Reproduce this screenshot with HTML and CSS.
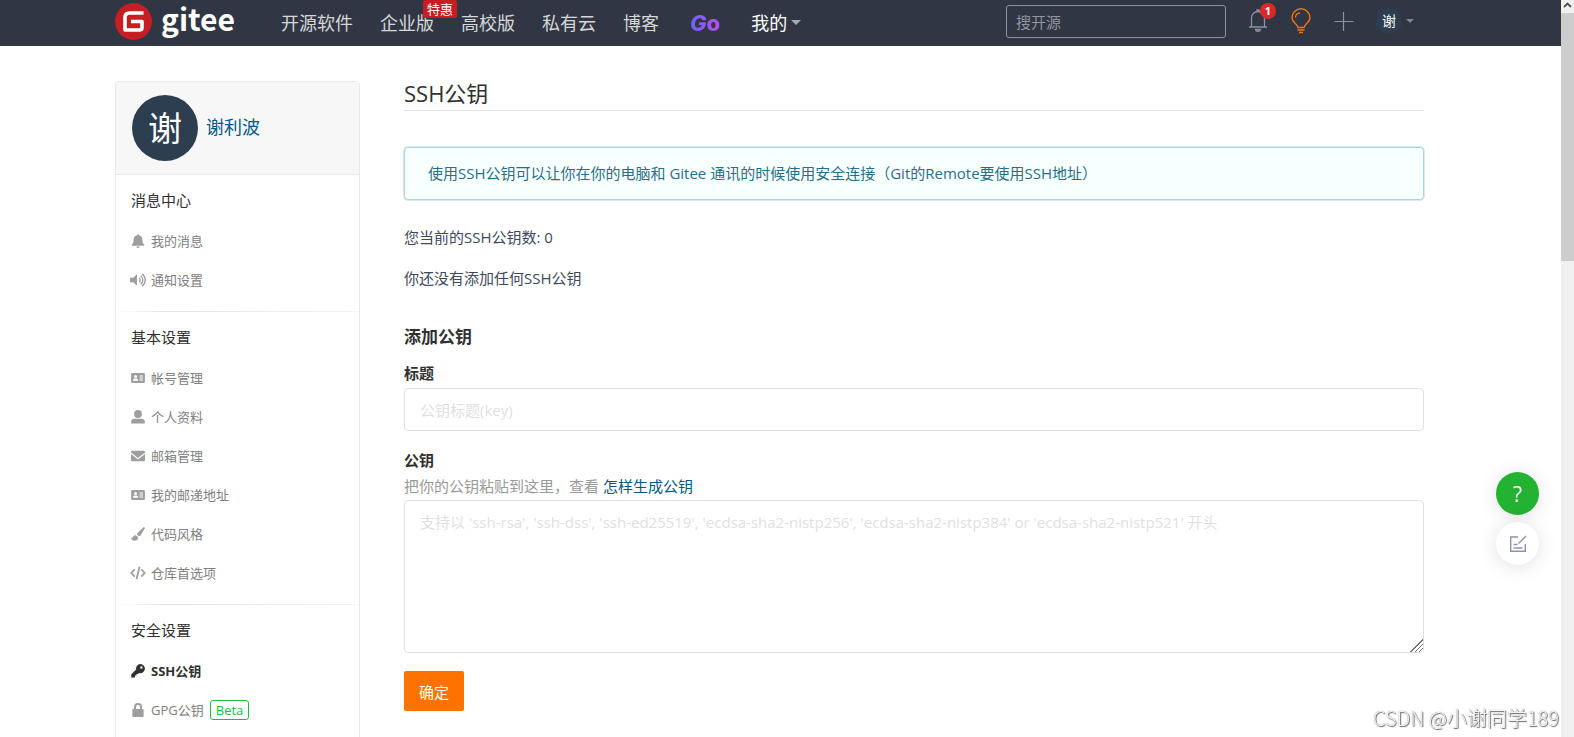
FILE: index.html
```html
<!DOCTYPE html>
<html lang="zh-CN">
  <head>
    <meta charset="UTF-8" />
    <meta name="viewport" content="width=device-width, initial-scale=1.0" />
    <title>SSH公钥 - Gitee</title>
    <link rel="stylesheet" href="styles.css">
  </head>
  <body>
    <svg class="sprite" aria-hidden="true">
      <symbol id="card" viewBox="0 0 14 12">
        <path fill-rule="evenodd" d="M1.3 1h11.4a1.2 1.2 0 0 1 1.2 1.2v7.6a1.2 1.2 0 0 1-1.2 1.2H1.3A1.2 1.2 0 0 1 .1 9.8V2.2A1.2 1.2 0 0 1 1.3 1zM4.6 3a1.5 1.5 0 1 0 0 3 1.5 1.5 0 0 0 0-3zM2 8.800h5.200c0-1.500-.8-2.300-1.600-2.300h-2C2.800 6.500 2 7.300 2 8.800zM8.500 3.500v1H12v-1zM8.500 5.500v1H12v-1zM8.500 7.500v1H12v-1z"/>
      </symbol>
    </svg>

    <header class="header">
      <div class="container header-inner">
        <a class="logo" href="#">
          <svg width="37" height="37" viewBox="0 0 37 37">
            <circle cx="18.5" cy="18.5" r="18.5" fill="#c71d23"/>
            <path d="M28.5 10H14.5Q10 10 10 14.500V27H24.500Q27 27 27 24.500V18.500H16" fill="none" stroke="#fff" stroke-width="3.600" stroke-linejoin="round"/>
          </svg>
          <span>gitee</span>
        </a>
        <nav class="nav">
          <a href="#">开源软件</a>
          <a class="enterprise" href="#">企业版<span class="promo">特惠</span></a>
          <a href="#">高校版</a>
          <a href="#">私有云</a>
          <a href="#">博客</a>
          <a class="go" href="#"><em>G</em>o</a>
          <a class="mine" href="#">我的<i class="caret"></i></a>
        </nav>
        <div class="tools">
          <input class="search" type="text" placeholder="搜开源" aria-label="搜开源">
          <a class="tool" href="#" aria-label="通知">
            <svg width="22" height="26" viewBox="0 0 22 26" fill="none" stroke="#8c92a4" stroke-width="1.3">
              <path d="M2 19h18M4.500 19v-9c0-4 3-6.500 6.500-6.500s6.500 2.500 6.500 6.500v9M10 3.500V2h2v1.500M8.500 21.500c.5 2.500 4.500 2.500 5 0z"/>
            </svg>
            <span class="count">1</span>
          </a>
          <a class="tool" href="#" aria-label="提示">
            <svg width="22" height="26" viewBox="0 0 22 26" fill="none" stroke="#fe7300" stroke-width="1.4">
              <path d="M8 19.500C7 15.500 2 14.500 2 9.800a9 9 0 0 1 18 0c0 4.700-5 5.700-6 9.700zM7.500 22h7M9 24.500h4M5.500 9.500c0-2.500 2-4.500 4.500-4.500"/>
            </svg>
          </a>
          <a class="tool" href="#" aria-label="新建">
            <svg width="22" height="26" viewBox="0 0 22 26" stroke="#8c92a4" stroke-width="1.2">
              <path d="M1.500 13.500h19M10.500 4v19"/>
            </svg>
          </a>
          <a class="user" href="#"><span class="user-avatar">谢</span><i class="caret"></i></a>
        </div>
      </div>
    </header>

    <div class="container page">
      <aside class="sidebar">
        <div class="profile">
          <span class="profile-avatar">谢</span>
          <a href="#">谢利波</a>
        </div>

        <section class="group">
          <h2>消息中心</h2>
          <a class="item" href="#">
            <svg viewBox="0 0 14 14"><path d="M6.200.9a.8.8 0 0 1 1.600 0v.4c2.200.4 3.600 2 3.600 4.400 0 2.800.6 3.800 1.700 4.700.5.500.2 1.300-.5 1.300H1.400c-.7 0-1-.8-.5-1.300C2 9.500 2.600 8.500 2.600 5.700c0-2.400 1.400-4 3.600-4.400zM5.400 12.400h3.200a1.600 1.600 0 0 1-3.200 0z"/></svg>
            我的消息</a>
          <a class="item" href="#">
            <svg viewBox="1 0 14 14"><path d="M0 4.700h3.200L7 1.200v11.600L3.200 9.300H0z"/><path d="M9 4.700c1.700 1.200 1.700 3.400 0 4.600M10.500 2.700c3.200 2.200 3.200 6.400 0 8.600M12 .9c4.300 3 4.300 9.200 0 12.200" fill="none" stroke="currentColor" stroke-width="1.300"/></svg>
            通知设置</a>
        </section>

        <section class="group">
          <h2>基本设置</h2>
          <a class="item" href="#"><svg viewBox="0 0 14 12"><use href="#card"/></svg>帐号管理</a>
          <a class="item" href="#">
            <svg viewBox="0 0 14 14"><circle cx="7" cy="4" r="3.900"/><path d="M.2 13.500v-2C.2 9.700 1.500 8.700 3.500 8.700h7c2 0 3.300 1 3.300 2.800v2z"/></svg>
            个人资料</a>
          <a class="item" href="#">
            <svg viewBox="0 0 14 12"><path d="M0 2a1.200 1.200 0 0 1 1.200-1.200h11.600A1.200 1.200 0 0 1 14 2v.5L7 8 0 2.500zM0 4l7 5.400L14 4v6a1.200 1.200 0 0 1-1.200 1.200H1.200A1.200 1.200 0 0 1 0 10z"/></svg>
            邮箱管理</a>
          <a class="item" href="#"><svg viewBox="0 0 14 12"><use href="#card"/></svg>我的邮递地址</a>
          <a class="item" href="#">
            <svg viewBox="0 0 14 14"><path d="M12.500.3c.8-.5 1.700.3 1.300 1.200L9.700 8.200c-.5.700-1.200 1-2 .9L6 7.500c0-.8.2-1.300.8-1.800zM5 8.300l2 1.900c.2 2.300-1.300 3.600-3.500 3.600-2.300 0-3.300-1.500-3.500-3.300 1 .6 1.600.5 2-.4.500-1.200 1.600-1.900 3-1.800z"/></svg>
            代码风格</a>
          <a class="item" href="#">
            <svg viewBox="1 0 14 14"><path d="M4.800 3.300L1.300 7l3.500 3.700M11.200 3.300L14.700 7l-3.500 3.700M9.500.8l-3 12.400" fill="none" stroke="currentColor" stroke-width="1.800"/></svg>
            仓库首选项</a>
        </section>

        <section class="group">
          <h2>安全设置</h2>
          <a class="item active" href="#">
            <svg viewBox="0 0 14 14"><path fill-rule="evenodd" d="M9.400 0A4.600 4.600 0 1 1 8 9L7 10H5.500v1.500H4V13.600H.2v-3.200l4.900-4.900A4.600 4.600 0 0 1 9.400 0zM10.400 2.300a1.200 1.200 0 1 0 0 2.400 1.200 1.200 0 0 0 0-2.400z"/></svg>
            SSH公钥</a>
          <a class="item" href="#">
            <svg viewBox="0 0 14 14"><path fill-rule="evenodd" d="M3 6V4a4 4 0 0 1 8 0v2h.6c.6 0 1 .4 1 1v6c0 .6-.4 1-1 1H2.400c-.6 0-1-.4-1-1V7c0-.6.4-1 1-1zM5 6h4V4a2 2 0 0 0-4 0z"/></svg>
            GPG公钥<span class="beta">Beta</span></a>
        </section>
      </aside>

      <main class="main">
        <h1>SSH公钥</h1>
        <div class="message">使用SSH公钥可以让你在你的电脑和 Gitee 通讯的时候使用安全连接（Git的Remote要使用SSH地址）</div>
        <p>您当前的SSH公钥数: 0</p>
        <p>你还没有添加任何SSH公钥</p>

        <form class="key-form">
          <h3>添加公钥</h3>
          <label for="key-title">标题</label>
          <input type="text" id="key-title" placeholder="公钥标题(key)">
          <label for="key-body">公钥</label>
          <div class="hint">把你的公钥粘贴到这里，查看 <a href="#">怎样生成公钥</a></div>
          <textarea id="key-body" placeholder="支持以 'ssh-rsa', 'ssh-dss', 'ssh-ed25519', 'ecdsa-sha2-nistp256', 'ecdsa-sha2-nistp384' or 'ecdsa-sha2-nistp521' 开头"></textarea>
          <button class="submit" type="submit">确定</button>
        </form>
      </main>
    </div>

    <div class="float-tools">
      <button class="help" type="button" aria-label="帮助">?</button>
      <button class="feedback" type="button" aria-label="反馈">
        <svg width="18" height="18" viewBox="0 0 18 18" fill="none" stroke="#8c92ac" stroke-width="1.4">
          <path d="M9 2H1.700v14.300h14.600V9M9.500 8.500L17 1M4.500 9.500h4M4.500 13h9"/>
        </svg>
      </button>
    </div>

    <div class="scrollbar">
      <svg width="13" height="13" viewBox="0 0 13 13" fill="none" stroke="#505050" stroke-width="1.8"><path d="M3 7l3.500-3.500L10 7"/></svg>
      <div class="thumb"></div>
    </div>
    <div class="watermark">CSDN @小谢同学189</div>
  </body>
</html>
```
FILE: styles.css
```css
* {
  box-sizing: border-box;
}

body {
  margin: 0;
  padding-right: 13px;
  height: 100vh;
  overflow: hidden;
  background: #fff;
  color: #40485b;
  font-family: "Open Sans", "Noto Sans CJK SC", sans-serif;
  font-size: 15px;
}

a {
  color: #005980;
  text-decoration: none;
}

input, textarea, button {
  font-family: inherit;
  font-size: 15px;
}

.sprite {
  display: none;
}

.container {
  max-width: 1331px;
  margin: 0 auto;
}

/* header */
.header {
  height: 46px;
  background: #303643;
}
.header-inner {
  display: flex;
  align-items: center;
  height: 43px;
  padding-right: 32px;
}
.logo {
  display: flex;
  align-items: center;
  gap: 9px;
  width: 166px;
  color: #fff;
  font-family: "Noto Sans CJK SC", sans-serif;
  font-size: 30px;
  font-weight: 700;
  line-height: 44px;
}
.logo span {
  padding-bottom: 8px;
}
.nav {
  display: flex;
  align-items: center;
  gap: 27px;
  font-size: 18px;
  padding-top: 2px;
  white-space: nowrap;
}
.nav a {
  color: #d6d7d9;
  line-height: 26px;
}
.enterprise {
  position: relative;
}
.promo {
  position: absolute;
  top: -10px;
  left: 43px;
  padding: 0 4px;
  border-radius: 2px;
  background: #c71d23;
  color: #fff;
  font-size: 13px;
  line-height: 18px;
}
.nav .go {
  margin: 0 4px;
  background: linear-gradient(90deg, #6e63f6, #b94df0);
  background-clip: text;
  -webkit-background-clip: text;
  color: transparent;
  font-family: Inter, sans-serif;
  font-size: 22px;
  font-weight: 800;
}
.nav .mine {
  display: flex;
  align-items: center;
  gap: 4px;
  color: #fff;
}
.caret {
  border: 5px solid transparent;
  border-top-color: #a5a9b2;
  border-bottom: 0;
}
.tools {
  display: flex;
  align-items: center;
  gap: 21px;
  margin-left: auto;
}
.search {
  width: 220px;
  height: 33px;
  padding: 0 9px;
  border: 1px solid #8c92a0;
  border-radius: 3px;
  background: transparent;
  color: #fff;
}
.search::placeholder {
  color: #9195a0;
}
.tool {
  position: relative;
  display: flex;
  padding-bottom: 2px;
}
.count {
  position: absolute;
  top: -5px;
  left: 13px;
  width: 16px;
  height: 16px;
  border-radius: 50%;
  background: #db2828;
  color: #fff;
  font-size: 11px;
  font-weight: 700;
  line-height: 16px;
  text-align: center;
}
.user {
  display: flex;
  align-items: center;
  gap: 4px;
  padding-bottom: 2px;
}
.user-avatar {
  width: 26px;
  height: 26px;
  border-radius: 50%;
  background: #2c3e50;
  color: #fff;
  font-size: 14px;
  line-height: 26px;
  text-align: center;
}
.user .caret {
  border-width: 4px;
  border-bottom: 0;
  border-top-color: #80869a;
}

/* page */
.page {
  display: flex;
  align-items: flex-start;
  gap: 44px;
  padding: 35px 22px 0 0;
}

.sidebar {
  flex: none;
  width: 245px;
  border: 1px solid #e3e9ed;
  border-radius: 4px;
}
.profile {
  display: flex;
  align-items: center;
  gap: 8px;
  height: 93px;
  padding: 0 16px;
  border-bottom: 1px solid #e3e9ed;
  background: #f7f7f8;
  font-size: 18px;
}
.profile a {
  padding-bottom: 4px;
}
.profile-avatar {
  width: 66px;
  height: 66px;
  border-radius: 50%;
  background: #2c3e50;
  color: #fff;
  font-size: 34px;
  line-height: 66px;
  text-align: center;
}
.group {
  padding: 4px 15px 12px;
}
.group + .group {
  padding-top: 5px;
  background: linear-gradient(90deg, #fff, #e3e3e3 20%, #f4f4f4) top / 100% 1px no-repeat;
}
.group h2 {
  margin: 0;
  color: #303030;
  font-size: 15px;
  font-weight: 400;
  line-height: 42px;
}
.item {
  display: flex;
  align-items: center;
  gap: 6px;
  height: 39px;
  color: #808080;
  font-size: 13px;
}
.item svg {
  flex: none;
  width: 14px;
  height: 14px;
  fill: currentColor;
  color: #9e9e9e;
  overflow: visible;
}
.item.active {
  color: #303030;
  font-weight: 700;
}
.item.active svg {
  color: #303030;
}
.beta {
  padding: 0 5px;
  border: 1px solid #21ba45;
  border-radius: 3px;
  color: #21ba45;
  font-size: 13px;
  line-height: 18px;
}

.main {
  flex: 1;
  min-width: 0;
}
.main h1 {
  margin: 0 0 36px;
  padding-bottom: 4px;
  border-bottom: 1px solid #e3e3e3;
  color: #303030;
  font-size: 22px;
  font-weight: 400;
  line-height: 25px;
}
.main p {
  margin: 0 0 19px;
  line-height: 22px;
}
.message {
  margin-bottom: 26px;
  padding: 0 23px;
  border: 1px solid #a9d5de;
  border-radius: 4px;
  box-shadow: 0 0 0 1px #dce9ee;
  background: #f8ffff;
  color: #276f86;
  line-height: 51px;
}

.key-form {
  display: flex;
  flex-direction: column;
  align-items: flex-start;
  padding-top: 17px;
}
.key-form h3 {
  margin: 0 0 13px;
  color: #303030;
  font-size: 17px;
  line-height: 24px;
}
.key-form label {
  color: #303030;
  font-weight: 700;
  line-height: 22px;
}
.key-form input, .key-form textarea {
  width: 100%;
  border: 1px solid #dce0e8;
  border-radius: 4px;
  background: #fff;
}
.key-form input {
  height: 43px;
  margin: 4px 0 18px;
  padding: 0 15px;
}
.key-form textarea {
  height: 153px;
  margin-bottom: 18px;
  padding: 10px 15px;
  line-height: 22px;
  resize: vertical;
}
.key-form textarea::-webkit-resizer {
  background: linear-gradient(135deg, #fff 50%, transparent 50%), repeating-linear-gradient(135deg, #777 0 1px, #fff 1px 3px);
}
.key-form ::placeholder {
  color: #dfdfdf;
}
.hint {
  margin: 4px 0 3px;
  color: #999;
  line-height: 22px;
}
.submit {
  height: 40px;
  padding: 0 15px;
  border: 0;
  border-radius: 2px;
  background: #fe7300;
  color: #fff;
}

/* things that stay over the page */
.float-tools {
  position: fixed;
  right: 35px;
  bottom: 172px;
  display: flex;
  flex-direction: column;
  gap: 7px;
}
.float-tools button {
  display: flex;
  align-items: center;
  justify-content: center;
  width: 43px;
  height: 43px;
  padding: 0;
  border: 0;
  border-radius: 50%;
  background: #fff;
  box-shadow: 0 2px 20px rgba(0, 0, 0, 0.12);
}
.float-tools .help {
  background: #24b232;
  color: #fff;
  font-size: 21px;
}
.scrollbar {
  position: fixed;
  top: 0;
  right: 0;
  bottom: 0;
  width: 13px;
  background: #f0f0f0;
}
.scrollbar svg {
  display: block;
}
.thumb {
  height: 248px;
  background: #cdcdcd;
}
.watermark {
  position: fixed;
  right: 15px;
  bottom: 5px;
  color: #f4f4f4;
  font-family: "Noto Sans CJK SC", sans-serif;
  font-size: 20px;
  font-weight: 300;
  line-height: 28px;
  text-shadow: 1px 1px 1px #666, 0 0 1px #777;
}
```
